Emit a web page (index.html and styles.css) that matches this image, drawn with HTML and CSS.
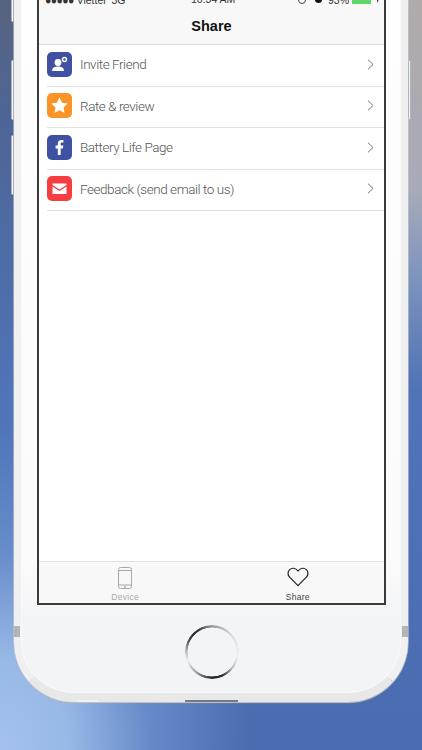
FILE: index.html
```html
<!DOCTYPE html>
<html lang="en">
<head>
    <meta charset="UTF-8">
    <meta name="viewport" content="width=device-width, initial-scale=1.0">
    <title>Share</title>
    <link rel="stylesheet" href="styles.css">
</head>
<body>

    <div class="scene">
        <div class="phone">
            <div class="screen">
                <div class="status-bar">
                    <span class="status-left"><span class="signal">●●●●●</span> Viettel &nbsp;3G</span>
                    <span class="status-time">10:34 AM</span>
                    <span class="status-right">
                        <span class="status-eye"></span>
                        <span class="status-moon"></span>
                        <span>93%</span>
                        <span class="battery"></span>
                        <svg width="7" height="8" viewBox="0 0 7 8"><path d="M1 4 L6 0 L3.5 7 L3 4 Z" fill="#333"/></svg>
                    </span>
                </div>
                <div class="nav-bar">Share</div>

                <ul class="menu">
                    <li class="menu-row">
                        <span class="menu-icon icon-blue">
                            <svg width="25" height="25" viewBox="0 0 25 25">
                                <circle cx="11" cy="10.5" r="3.4" fill="#fff"/>
                                <path d="M5 19 C5 15.5 8 14.6 11 14.6 C14 14.6 17 15.5 17 19 Z" fill="#fff"/>
                                <circle cx="17.5" cy="7.5" r="2" fill="none" stroke="#fff" stroke-width="1.4"/>
                            </svg>
                        </span>
                        <span class="menu-label">Invite Friend</span>
                        <svg class="chevron" width="7" height="11" viewBox="0 0 7 11"><path d="M1 .7 L6 5.5 L1 10.3" fill="none" stroke="#777" stroke-width="1"/></svg>
                    </li>
                    <li class="menu-row">
                        <span class="menu-icon icon-orange">
                            <svg width="25" height="25" viewBox="0 0 25 25">
                                <path d="M12.5 4.5 L15 9.8 L20.7 10.5 L16.5 14.4 L17.6 20 L12.5 17.2 L7.4 20 L8.5 14.4 L4.3 10.5 L10 9.8 Z" fill="#fff"/>
                            </svg>
                        </span>
                        <span class="menu-label">Rate &amp; review</span>
                        <svg class="chevron" width="7" height="11" viewBox="0 0 7 11"><path d="M1 .7 L6 5.5 L1 10.3" fill="none" stroke="#777" stroke-width="1"/></svg>
                    </li>
                    <li class="menu-row">
                        <span class="menu-icon icon-blue">
                            <svg width="25" height="25" viewBox="0 0 25 25">
                                <path d="M10.8 20 V13.4 H8.6 V10.6 H10.8 V8.7 C10.8 6.2 12.2 5 14.3 5 C15.3 5 16 5.1 16.4 5.1 V7.6 H15 C13.9 7.6 13.7 8.1 13.7 8.9 V10.6 H16.3 L15.9 13.4 H13.7 V20 Z" fill="#fff"/>
                            </svg>
                        </span>
                        <span class="menu-label">Battery Life Page</span>
                        <svg class="chevron" width="7" height="11" viewBox="0 0 7 11"><path d="M1 .7 L6 5.5 L1 10.3" fill="none" stroke="#777" stroke-width="1"/></svg>
                    </li>
                    <li class="menu-row">
                        <span class="menu-icon icon-red">
                            <svg width="25" height="25" viewBox="0 0 25 25">
                                <path d="M5.5 7.5 H19.5 V9 L12.5 13.4 L5.5 9 Z" fill="#fff"/>
                                <path d="M5.5 10.6 L12.5 15 L19.5 10.6 V18 H5.5 Z" fill="#fff"/>
                            </svg>
                        </span>
                        <span class="menu-label">Feedback (send email to us)</span>
                        <svg class="chevron" width="7" height="11" viewBox="0 0 7 11"><path d="M1 .7 L6 5.5 L1 10.3" fill="none" stroke="#777" stroke-width="1"/></svg>
                    </li>
                </ul>

                <div class="tab-bar">
                    <div class="tab">
                        <svg width="16" height="22" viewBox="0 0 16 22">
                            <rect x="1.5" y=".5" width="13" height="21" rx="2" fill="none" stroke="#a8a8a8"/>
                            <path d="M1.5 3.5 H14.5 M1.5 18 H14.5" stroke="#a8a8a8"/>
                            <circle cx="8" cy="19.8" r="1" fill="#a8a8a8"/>
                        </svg>
                        <span class="tab-label">Device</span>
                    </div>
                    <div class="tab tab-active">
                        <svg width="22" height="22" viewBox="0 0 22 22">
                            <path d="M11 18.6 L2.6 10.2 C0.4 8 0.6 4.6 2.6 2.6 C4.8 0.6 8.4 0.6 11 4 C13.6 0.6 17.2 0.6 19.4 2.6 C21.4 4.6 21.6 8 19.4 10.2 Z" fill="none" stroke="#222" stroke-width="1.2" stroke-linejoin="round"/>
                        </svg>
                        <span class="tab-label">Share</span>
                    </div>
                </div>
            </div>

            <div class="home-button"></div>
        </div>

        <!-- hardware bits that sit on the rim -->
        <span class="side-btn side-mute"></span>
        <span class="side-btn side-up"></span>
        <span class="side-btn side-down"></span>
        <span class="side-btn side-power"></span>
        <span class="band band-left"></span>
        <span class="band band-right"></span>
        <span class="port port-jack"></span>
        <span class="port port-charge"></span>
    </div>

</body>
</html>
```

FILE: styles.css
```css
* {
    box-sizing: border-box;
}
body {
    margin: 0;
    padding: 0;
    font-family: "Liberation Sans", Arial, sans-serif;
}
.scene {
    position: relative;
    width: 422px;
    height: 750px;
    overflow: hidden;
    background-color: #4a6cb0;
    background-image:
        radial-gradient(ellipse 250px 330px at 0 750px, #a4c2ec 0%, rgba(158, 190, 235, 0.92) 28%, rgba(130, 168, 225, 0.5) 60%, rgba(110, 150, 215, 0) 100%),
        linear-gradient(180deg, rgba(178, 170, 170, 1) 0, rgba(172, 174, 186, 0.95) 190px, rgba(140, 160, 198, 0.75) 280px, rgba(78, 114, 182, 0) 390px),
        linear-gradient(180deg, #57647f 0, #4d6596 120px, #4f74b8 400px, #4a6cb0 750px);
    background-size: 100% 100%, 50% 100%, 100% 100%;
    background-position: 0 0, 100% 0, 0 0;
    background-repeat: no-repeat;
}

/* phone body, top runs out of the picture */
.phone {
    width: 394px;
    height: 742px;
    margin: -40px 14px 0;
    padding: 0 16px;
    background: linear-gradient(180deg, #fefefe 0, #fbfbfb 600px, #f3f4f6 660px);
    border: 7px solid #f0f0f0;
    border-top: none;
    border-bottom: 9px solid #e8e8e8;
    border-radius: 0 0 60px 60px;
    box-shadow: inset 0 0 0 1px #fafafa, 0 0 0 0.5px #cfcfcf, 0 1px 1px #b4b4b4;
}
.screen {
    display: flex;
    flex-direction: column;
    width: 349px;
    height: 645px;
    background: #fff;
    border: 2px solid #3a3a3a;
    border-top: none;
}

.status-bar {
    display: flex;
    justify-content: space-between;
    align-items: center;
    height: 46px;
    padding: 33px 3px 0 6px;
    background: #f8f8f8;
    font-size: 10.5px;
    color: #333;
    position: relative;
}
.signal {
    letter-spacing: -0.6px;
}
.status-time {
    position: absolute;
    left: 152px;
    top: 33px;
}
.status-right {
    display: flex;
    align-items: center;
    gap: 3px;
}
.status-eye {
    width: 8px;
    height: 8px;
    margin-right: 6px;
    border: 1px solid #444;
    border-radius: 50%;
}
.status-moon {
    width: 7px;
    height: 7px;
    margin-right: 3px;
    background: #111;
    border-radius: 50%;
}
.battery {
    width: 19px;
    height: 8px;
    background: #63d66a;
}

.nav-bar {
    flex: none;
    height: 39px;
    padding-top: 2px;
    line-height: 36px;
    text-align: center;
    font-size: 14.5px;
    font-weight: bold;
    color: #111;
    background: #f8f8f8;
    border-bottom: 1px solid #dcdcdc;
}

.menu {
    flex: 1;
    margin: 0;
    padding: 0;
    list-style: none;
}
.menu-row {
    display: flex;
    align-items: center;
    height: 41.5px;
    margin-left: 8px;
    padding-right: 10px;
    padding-bottom: 2px;
    border-bottom: 1px solid #e2e2e2;
}
.menu-icon {
    flex: none;
    width: 25px;
    height: 25px;
    margin-right: 8px;
    border-radius: 5px;
}
.menu-icon svg {
    display: block;
}
.icon-blue {
    background: #3f51a3;
}
.icon-orange {
    background: #fb9426;
}
.icon-red {
    background: #f63d41;
}
.menu-label {
    flex: 1;
    font-family: Roboto, "Liberation Sans", sans-serif;
    font-weight: 300;
    font-size: 13.5px;
    letter-spacing: -0.45px;
    color: #555;
}

.tab-bar {
    display: flex;
    flex: none;
    height: 42px;
    padding-top: 5px;
    background: #f8f8f8;
    border-top: 1px solid #e0e0e0;
}
.tab {
    flex: 1;
    display: flex;
    flex-direction: column;
    align-items: center;
}
.tab-label {
    margin-top: 3px;
    font-size: 8.5px;
    line-height: 10px;
    letter-spacing: 0.3px;
    color: #aaa;
}
.tab-active .tab-label {
    color: #444;
}

.home-button {
    width: 54px;
    height: 54px;
    margin: 20px 0 0 148px;
    border-radius: 50%;
    background: conic-gradient(#999 0deg, #ddd 50deg, #f2f2f2 100deg, #bbb 130deg, #333 155deg, #222 180deg, #999 215deg, #f0f0f0 250deg, #bbb 270deg, #333 305deg, #333 325deg, #999 360deg);
    -webkit-mask: radial-gradient(circle, transparent 24.2px, #000 24.7px);
    mask: radial-gradient(circle, transparent 24.2px, #000 24.7px);
}

.side-btn {
    position: absolute;
    width: 3px;
    background: #f2f4f8;
    border: 1px solid #aeb2bc;
    border-radius: 2px;
}
.side-mute {
    left: 11px;
    top: -10px;
    height: 32px;
}
.side-up {
    left: 11px;
    top: 60px;
    height: 60px;
}
.side-down {
    left: 11px;
    top: 135px;
    height: 60px;
}
.side-power {
    left: 408px;
    top: 60px;
    height: 60px;
}
.band {
    position: absolute;
    top: 626px;
    width: 6px;
    height: 11px;
    background: #b4b4b4;
}
.band-left {
    left: 14px;
}
.band-right {
    left: 402px;
}
.port {
    position: absolute;
    top: 700px;
    height: 2px;
}
.port-jack {
    left: 78px;
    width: 20px;
    background: #f2f2f2;
}
.port-charge {
    left: 185px;
    width: 53px;
    background: #77797e;
}
```
